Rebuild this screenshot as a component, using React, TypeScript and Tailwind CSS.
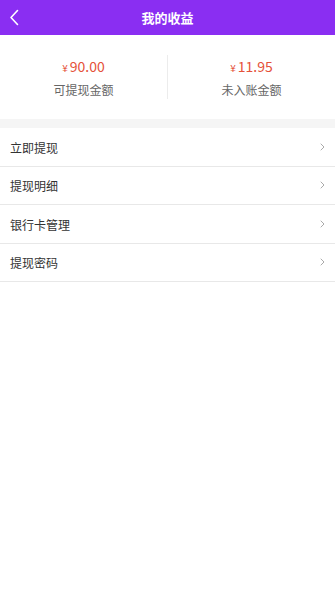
import React from 'react';

const menu = ['立即提现', '提现明细', '银行卡管理', '提现密码'];

export default function App() {
  return (
    <div
      className="w-[335px] min-h-[600px] bg-white"
      style={{ fontFamily: '"Noto Sans CJK SC", "Noto Sans", sans-serif' }}
    >
      {/* Header */}
      <div className="relative h-[35px] bg-[#8a2ef2] flex items-center justify-center">
        <button className="absolute left-[9px] top-[9px] w-[12px] h-[17px] flex items-center">
          <svg width="10" height="17" viewBox="0 0 10 17" fill="none">
            <path d="M8.5 1.5L2 8.5L8.5 15.5" stroke="#fff" strokeWidth="1.6" strokeLinecap="round" strokeLinejoin="round" />
          </svg>
        </button>
        <span className="text-white text-[13px] font-bold">我的收益</span>
      </div>

      {/* Summary */}
      <div className="h-[84px] flex items-center">
        <div className="flex-1 flex flex-col items-center">
          <div className="text-[#e5523a] text-[14px] leading-[20px]">
            <span className="text-[10px] mr-[2px]">¥</span>90.00
          </div>
          <div className="text-[#666] text-[12px] leading-[18px] mt-[3px]">可提现金额</div>
        </div>
        <div className="w-px h-[44px] bg-[#ececec]" />
        <div className="flex-1 flex flex-col items-center">
          <div className="text-[#e5523a] text-[14px] leading-[20px]">
            <span className="text-[10px] mr-[2px]">¥</span>11.95
          </div>
          <div className="text-[#666] text-[12px] leading-[18px] mt-[3px]">未入账金额</div>
        </div>
      </div>

      <div className="h-[9px] bg-[#f5f5f5]" />

      {/* Menu */}
      <div>
        {menu.map((m) => (
          <div key={m} className="h-[38.5px] flex items-center justify-between pl-[10px] pr-[10px] border-b border-[#e8e8e8]">
            <span className="text-[#333] text-[12px] mt-[2px]">{m}</span>
            <svg width="5" height="8" viewBox="0 0 5 8" fill="none">
              <path d="M1 1L4 4L1 7" stroke="#aaa" strokeWidth="1" strokeLinecap="round" strokeLinejoin="round" />
            </svg>
          </div>
        ))}
      </div>
    </div>
  );
}
